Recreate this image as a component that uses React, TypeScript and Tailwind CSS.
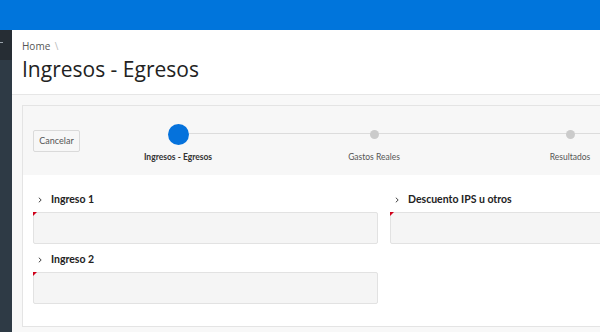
const font = { fontFamily: '"Open Sans", "Noto Sans", sans-serif' };
const small = { fontFamily: 'Lato, "Open Sans", sans-serif' };

function Field({ label }: { label: string }) {
  return (
    <div className="flex flex-col">
      <div className="flex h-[26px] items-center pl-[5px] pt-[2px] text-[10.5px] font-bold text-[#222]" style={small}>
        <svg width="4" height="6" viewBox="0 0 4 6" className="mr-[9px]">
          <path d="M0.8 0.7 L3.2 3 L0.8 5.3" fill="none" stroke="#444" strokeWidth="1" />
        </svg>
        {label}
      </div>
      <div className="relative h-[32px] rounded-[2px] border border-[#e2e2e2] bg-[#f5f5f5]">
        <span className="absolute left-[-1px] top-[-1px] h-0 w-0 border-r-[4px] border-t-[4px] border-r-transparent border-t-[#d0021b]" />
      </div>
    </div>
  );
}

function Step({ label, active, first }: { label: string; active?: boolean; first?: boolean }) {
  return (
    <div className="relative flex flex-col items-center">
      <div className="relative flex h-[22px] w-full items-center justify-center">
        <div
          className={
            "absolute top-[10px] h-px bg-[#dcdcdc] " + (first ? "left-1/2 right-0" : "left-0 right-0")
          }
        />
        {active ? (
          <div className="relative h-[21px] w-[21px] rounded-full bg-[#0572dc]" />
        ) : (
          <div className="relative h-[9px] w-[9px] rounded-full bg-[#cbcbcb]" />
        )}
      </div>
      <div
        className={
          "mt-[6px] text-[8.5px] " + (active ? "font-bold text-[#333]" : "text-[#555]")
        }
        style={small}
      >
        {label}
      </div>
    </div>
  );
}

export default function App() {
  return (
    <div className="h-[332px] w-[600px] overflow-hidden bg-[#f8f8f8]" style={font}>
      <div className="h-[30px] bg-[#0075dc]" />
      <div className="flex h-[302px]">
        <aside className="flex w-[12px] shrink-0 flex-col">
          <div className="relative h-[30px] bg-[#262d34]">
            <span className="absolute left-0 top-[12px] h-px w-[3px] bg-[#9aa3ab]" />
          </div>
          <div className="flex-1 bg-[#2e3a45]" />
        </aside>
        <main className="min-w-0 flex-1">
          <header className="h-[65px] border-b border-[#e6e6e6] bg-white pl-[10px] pt-[9px]">
            <div className="text-[10px] text-[#555]">
              Home <span className="ml-[2px] text-[#bbb]">\</span>
            </div>
            <h1 className="mt-[1px] text-[21px] leading-[28px] text-[#222]">Ingresos - Egresos</h1>
          </header>
          <div className="pl-[10px] pt-[10px]">
            <section className="h-[222px] w-[620px] border border-[#e4e4e4] bg-white">
              <div className="flex h-[69px] items-start bg-[#f7f7f7] pl-[10px] pt-[17px]">
                <button
                  className="mt-[7px] h-[22px] w-[47px] shrink-0 rounded-[2px] border border-[#dadada] bg-[#f7f7f7] text-[9px] text-[#555]"
                  style={small}
                >
                  Cancelar
                </button>
                <div className="grid grid-cols-[196px_196px_196px]">
                  <Step label="Ingresos - Egresos" active first />
                  <Step label="Gastos Reales" />
                  <Step label="Resultados" />
                </div>
              </div>
              <div className="grid grid-cols-[345px_345px] gap-x-[12px] gap-y-[2px] pl-[10px] pt-[11px]">
                <Field label="Ingreso 1" />
                <Field label="Descuento IPS u otros" />
                <Field label="Ingreso 2" />
              </div>
            </section>
          </div>
        </main>
      </div>
    </div>
  );
}
